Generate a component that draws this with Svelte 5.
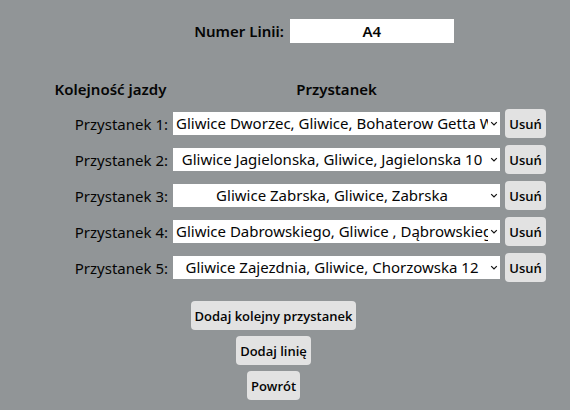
<script>
  const stops = [
    'Gliwice Dworzec, Gliwice, Bohaterow Getta Warszawskiego 12',
    'Gliwice Jagielonska, Gliwice, Jagielonska 10',
    'Gliwice Zabrska, Gliwice, Zabrska',
    'Gliwice Dabrowskiego, Gliwice , Dąbrowskiego 30',
    'Gliwice Zajezdnia, Gliwice, Chorzowska 12'
  ];

  let line = $state('A4');
  let route = $state(stops.map((stop, i) => ({ id: i, stop })));
  let nextId = stops.length;

  function addStop() {
    route.push({ id: nextId++, stop: stops[0] });
  }

  function removeStop(index) {
    route.splice(index, 1);
  }
</script>

<main>
  <form onsubmit={(e) => e.preventDefault()}>
    <div class="line">
      <label for="line-number">Numer Linii:</label>
      <input id="line-number" type="text" bind:value={line} />
    </div>

    <div class="row head">
      <span>Kolejność jazdy</span>
      <span>Przystanek</span>
    </div>

    <div class="route">
      {#each route as entry, i (entry.id)}
        <div class="row">
          <label for="stop-{entry.id}">Przystanek {i + 1}:</label>
          <div class="pick">
            <select id="stop-{entry.id}" bind:value={entry.stop}>
              {#each stops as stop}
                <option value={stop}>{stop}</option>
              {/each}
            </select>
            <svg viewBox="0 0 8 6" width="8" height="6" aria-hidden="true">
              <path d="M1.2 1.2 4 4 6.8 1.2" fill="none" stroke="#111" stroke-width="1.2" />
            </svg>
          </div>
          <button type="button" onclick={() => removeStop(i)}>Usuń</button>
        </div>
      {/each}
    </div>

    <div class="actions">
      <button type="button" onclick={addStop}>Dodaj kolejny przystanek</button>
      <button type="submit">Dodaj linię</button>
      <button type="button">Powrót</button>
    </div>
  </form>
</main>

<style>
  :global(body) {
    margin: 0;
    background: #919597;
  }

  main {
    padding: 19px 24px 10px 53px;
    color: #050505;
    font-family: 'Segoe UI', 'Noto Sans', 'Open Sans', sans-serif;
    font-size: 15px;
    line-height: 24px;
  }

  .line {
    display: flex;
    justify-content: center;
    align-items: center;
    gap: 6px;
    padding-left: 49px;
    font-weight: 600;
  }

  input {
    box-sizing: border-box;
    width: 164px;
    height: 24px;
    padding: 0 4px;
    border: 0;
    background: #fff;
    color: inherit;
    font: inherit;
    text-align: center;
  }

  .row {
    display: grid;
    grid-template-columns: 115px minmax(0, 1fr) 41px;
    align-items: center;
    column-gap: 5px;
  }

  .head {
    margin: 34px 0 8px;
    font-weight: 600;
    text-align: center;
    white-space: nowrap;
  }

  .route {
    display: grid;
    row-gap: 7px;
  }

  .row label {
    text-align: right;
  }

  .pick {
    position: relative;
    display: flex;
  }

  select {
    appearance: none;
    box-sizing: border-box;
    width: 100%;
    height: 23px;
    padding: 0 12px 0 3px;
    border: 0;
    border-radius: 0;
    background: #fff;
    color: inherit;
    font: inherit;
    line-height: 23px;
    text-align: center;
    text-align-last: center;
  }

  .pick svg {
    position: absolute;
    top: 9px;
    right: 2px;
    pointer-events: none;
  }

  button {
    height: 29px;
    padding: 0 4px;
    border: 0;
    border-radius: 4px;
    background: #e2e2e2;
    color: inherit;
    font: inherit;
    font-family: 'Segoe UI', 'Open Sans', 'Noto Sans', sans-serif;
    font-size: 13px;
    font-weight: 600;
    white-space: nowrap;
  }

  .actions {
    display: flex;
    flex-direction: column;
    align-items: center;
    gap: 6px;
    margin-top: 19px;
    padding-right: 52px;
  }
</style>
